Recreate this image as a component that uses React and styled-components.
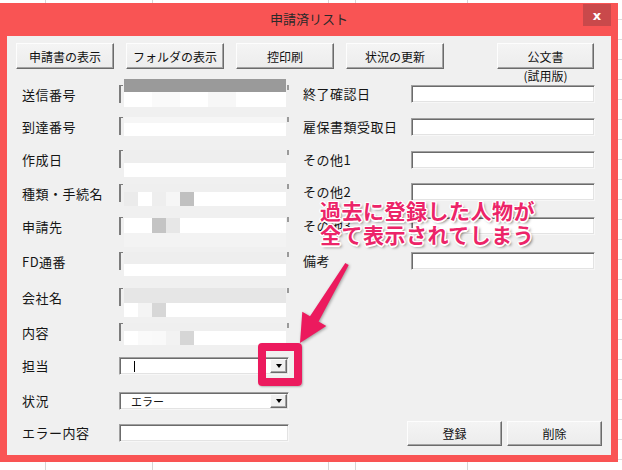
import styled, { createGlobalStyle } from 'styled-components';

const GlobalStyle = createGlobalStyle`
  html, body {
    margin: 0;
    padding: 0;
  }
  body {
    width: 622px;
    height: 470px;
    overflow: hidden;
    background: #fff;
    font-family: "Noto Sans CJK JP", "Noto Sans", sans-serif;
    color: #151515;
  }
`;

const gridLine = 'linear-gradient(#d6d6d6, #d6d6d6)';

const Sheet = styled.div`
  position: relative;
  width: 622px;
  height: 470px;
  padding-top: 3px;
  box-sizing: border-box;
  background-color: #fff;
  background-image: ${gridLine}, ${gridLine}, ${gridLine}, ${gridLine}, ${gridLine},
    repeating-linear-gradient(to bottom, transparent 0 19px, #dcdcdc 19px 20px);
  background-size: 1px 100%, 1px 100%, 1px 100%, 1px 100%, 1px 100%, 100% 100%;
  background-position: 45px 0, 152px 0, 328px 0, 355px 0, 467px 0, 0 0;
  background-repeat: no-repeat;
`;

const Window = styled.div`
  width: 618px;
  padding: 0 7px 7px;
  box-sizing: border-box;
  background: #f95454;
`;

const TitleBar = styled.div`
  height: 33px;
  display: grid;
  grid-template-columns: 1fr auto 1fr;
  align-items: center;
`;

const Title = styled.div`
  grid-column: 2;
  font-size: 13px;
  line-height: 16px;
  color: #2a2a2a;
  padding-bottom: 2px;
`;

const CloseButton = styled.div`
  grid-column: 3;
  justify-self: end;
  align-self: start;
  margin-top: 1px;
  width: 28px;
  height: 22px;
  background: #c9494b;
  color: #fff;
  display: flex;
  align-items: center;
  justify-content: center;
  font-family: "DejaVu Sans", sans-serif;
  font-size: 13px;
  font-weight: bold;
`;

const Panel = styled.div`
  height: 419px;
  box-sizing: border-box;
  padding: 7px 9px 9px 9px;
  background: #f0f0f0;
  display: flex;
  flex-direction: column;
`;

const Toolbar = styled.div`
  display: flex;
  align-items: flex-start;
  gap: 12px;
  margin-right: 8px;
`;

const Button = styled.div`
  width: ${p => p.$w || 98}px;
  height: ${p => p.$h || 26}px;
  box-sizing: border-box;
  display: flex;
  align-items: center;
  justify-content: center;
  font-size: 12px;
  color: #111;
  background: linear-gradient(#f4f4f4, #ececec);
  border: 1px solid;
  border-color: #fdfdfd #6b6b6b #6b6b6b #fdfdfd;
  box-shadow: inset -1px -1px 0 #a3a3a3;
`;

const ButtonStack = styled.div`
  margin-left: auto;
  display: flex;
  flex-direction: column;
  align-items: center;
`;

const Caption = styled.div`
  font-size: 12px;
  line-height: 13px;
  color: #111;
`;

const Form = styled.div`
  flex: 1;
  display: flex;
  margin-top: 3px;
  padding-left: 6px;
`;

const LeftCol = styled.div`
  display: flex;
  flex-direction: column;
`;

const RightCol = styled.div`
  flex: 1;
  margin-left: 14px;
  display: flex;
  flex-direction: column;
`;

const Row = styled.div`
  height: ${p => p.$h}px;
  display: flex;
  align-items: flex-start;
`;

const Label = styled.div`
  width: ${p => p.$w}px;
  line-height: ${p => p.$lh || 19}px;
  font-size: 13px;
  letter-spacing: 0.5px;
  white-space: nowrap;
`;

const TextBox = styled.div`
  width: ${p => p.$w}px;
  height: 18px;
  box-sizing: border-box;
  background: #fff;
  border: 1px solid;
  border-color: #a0a0a0 #f7f7f7 #f7f7f7 #a0a0a0;
  box-shadow: inset 1px 1px 0 #6b6b6b, inset -1px -1px 0 #e3e3e3;
`;

const MaskedBox = styled.div`
  position: relative;
  width: 170px;
  height: 19px;

  &::before {
    content: '';
    position: absolute;
    left: 0;
    top: 0;
    width: 4px;
    height: 18px;
    border-left: 2px solid #7c7c7c;
    border-top: 1px solid #7c7c7c;
    box-sizing: border-box;
  }

  &::after {
    content: '';
    position: absolute;
    right: 0;
    top: 0;
    width: 2px;
    height: 5px;
    background: #9a9a9a;
  }
`;

const Mosaic = styled.div`
  position: absolute;
  left: 5px;
  right: 3px;
  top: ${p => p.$top || 0}px;
  display: flex;
  flex-direction: column;
`;

const MosaicRow = styled.div`
  height: ${p => p.$h}px;
  background: ${p => p.$bg};
  display: flex;
`;

const Cell = styled.div`
  width: 14px;
  background: ${p => p.$c};
`;

const Combo = styled(TextBox)`
  width: 170px;
  display: flex;
  align-items: center;
  padding: 0 1px 0 9px;
  font-size: 11px;
  line-height: 14px;
`;

const ComboText = styled.div`
  flex: 1;
  padding-left: 2px;
`;

const Caret = styled.div`
  width: 1px;
  height: 11px;
  margin-left: 3px;
  background: #000;
`;

const DropButton = styled.div`
  width: 17px;
  height: 14px;
  box-sizing: border-box;
  display: flex;
  align-items: center;
  justify-content: center;
  background: #f0f0f0;
  border: 1px solid;
  border-color: #fdfdfd #6b6b6b #6b6b6b #fdfdfd;
  box-shadow: inset -1px -1px 0 #a3a3a3;

  &::before {
    content: '';
    border-left: 3.5px solid transparent;
    border-right: 3.5px solid transparent;
    border-top: 4px solid #000;
  }
`;

const Footer = styled.div`
  margin-top: auto;
  display: flex;
  justify-content: flex-end;
  gap: 5px;
`;

const Note = styled.div`
  position: absolute;
  left: 320px;
  top: 198px;
  font-size: 21px;
  line-height: 24px;
  font-weight: 700;
  letter-spacing: 0.5px;
  color: #ec2468;
  white-space: nowrap;
  text-shadow: -1px -1px 0 #fff, 1px -1px 0 #fff, -1px 1px 0 #fff, 1px 1px 0 #fff,
    0 -1.5px 0 #fff, 0 1.5px 0 #fff, -1.5px 0 0 #fff, 1.5px 0 0 #fff,
    2px 2px 3px rgba(0, 0, 0, 0.55);
`;

const Arrow = styled.svg`
  position: absolute;
  left: 290px;
  top: 255px;
  filter: drop-shadow(1px 1px 1.5px rgba(0, 0, 0, 0.35));
`;

const Highlight = styled.div`
  position: absolute;
  left: 258px;
  top: 343px;
  width: 44px;
  height: 43px;
  box-sizing: border-box;
  border: 8px solid #ec1a5e;
  border-radius: 4px;
  box-shadow: 1px 1px 2px rgba(0, 0, 0, 0.25);
`;

const W = '#fff';

const masked = [
  { label: '送信番号', h: 32, top: -6, rows: [
    { h: 13, bg: '#9a9a9a' },
    { h: 15, bg: W, cells: [W, W, '#fafafa', '#fafafa', W, W, '#f7f7f7', '#f7f7f7'] },
  ] },
  { label: '到達番号', h: 33, rows: [
    { h: 6, bg: '#f6f6f6' },
    { h: 13, bg: W },
  ] },
  { label: '作成日', h: 34, rows: [
    { h: 13, bg: '#eeeeee' },
    { h: 14, bg: W },
  ] },
  { label: '種類・手続名', h: 33, rows: [
    { h: 8, bg: '#efefef' },
    { h: 14, bg: W, cells: ['#ebebeb', W, '#eeeeee', '#f6f6f6', '#c0c0c0'] },
  ] },
  { label: '申請先', h: 35, top: 1, rows: [
    { h: 15, bg: W, cells: [W, W, '#c4c4c4', '#e7e7e7'] },
    { h: 14, bg: '#f3f3f3' },
  ] },
  { label: 'FD通番', h: 36, rows: [
    { h: 12, bg: '#eeeeee' },
    { h: 12, bg: W },
  ] },
  { label: '会社名', h: 35, rows: [
    { h: 15, bg: '#e6e6e6' },
    { h: 14, bg: W, cells: [W, '#f4f4f4', '#d7d7d7'] },
  ] },
  { label: '内容', h: 34, rows: [
    { h: 8, bg: '#efefef' },
    { h: 14, bg: W, cells: [W, '#fafafa', '#f9f9f9', '#f2f2f2', '#d6d6d6'] },
  ] },
];

const rightFields = [
  { label: '終了確認日', h: 33 },
  { label: '雇保書類受取日', h: 33 },
  { label: 'その他1', h: 32 },
  { label: 'その他2', h: 34 },
  { label: 'その他3', h: 35 },
  { label: '備考', h: 18 },
];

const topButtons = ['申請書の表示', 'フォルダの表示', '控印刷', '状況の更新'];

const App = () => (
  <>
    <GlobalStyle />
    <Sheet>
      <Window>
        <TitleBar>
          <Title>申請済リスト</Title>
          <CloseButton>x</CloseButton>
        </TitleBar>
        <Panel>
          <Toolbar>
            {topButtons.map(name => (
              <Button key={name}>{name}</Button>
            ))}
            <ButtonStack>
              <Button $w={97}>公文書</Button>
              <Caption>(試用版)</Caption>
            </ButtonStack>
          </Toolbar>
          <Form>
            <LeftCol>
              {masked.map(({ label, h, top, rows }) => (
                <Row key={label} $h={h}>
                  <Label $w={97}>{label}</Label>
                  <MaskedBox>
                    <Mosaic $top={top}>
                      {rows.map((r, i) => (
                        <MosaicRow key={i} $h={r.h} $bg={r.bg}>
                          {(r.cells || []).map((c, j) => (
                            <Cell key={j} $c={c} />
                          ))}
                        </MosaicRow>
                      ))}
                    </Mosaic>
                  </MaskedBox>
                </Row>
              ))}
              <Row $h={35}>
                <Label $w={97} $lh={18}>担当</Label>
                <Combo>
                  <ComboText>
                    <Caret />
                  </ComboText>
                  <DropButton />
                </Combo>
              </Row>
              <Row $h={32}>
                <Label $w={97} $lh={18}>状況</Label>
                <Combo>
                  <ComboText>エラー</ComboText>
                  <DropButton />
                </Combo>
              </Row>
              <Row $h={22}>
                <Label $w={97} $lh={18}>エラー内容</Label>
                <TextBox $w={170} />
              </Row>
            </LeftCol>
            <RightCol>
              {rightFields.map(({ label, h }) => (
                <Row key={label} $h={h}>
                  <Label $w={108} $lh={18}>{label}</Label>
                  <TextBox $w={184} />
                </Row>
              ))}
              <Footer>
                <Button $w={95} $h={25}>登録</Button>
                <Button $w={95} $h={25}>削除</Button>
              </Footer>
            </RightCol>
          </Form>
        </Panel>
      </Window>

      <Note>
        過去に登録した人物が
        <br />
        全て表示されてしまう
      </Note>
      <Arrow width="70" height="95" viewBox="0 0 70 95">
        <polygon
          points="55.3,8 20,61.3 12.3,56.8 10,88 36.3,71 28.6,66.5 58.7,10"
          fill="#ec1a5e"
        />
      </Arrow>
      <Highlight />
    </Sheet>
  </>
);

export default App;
